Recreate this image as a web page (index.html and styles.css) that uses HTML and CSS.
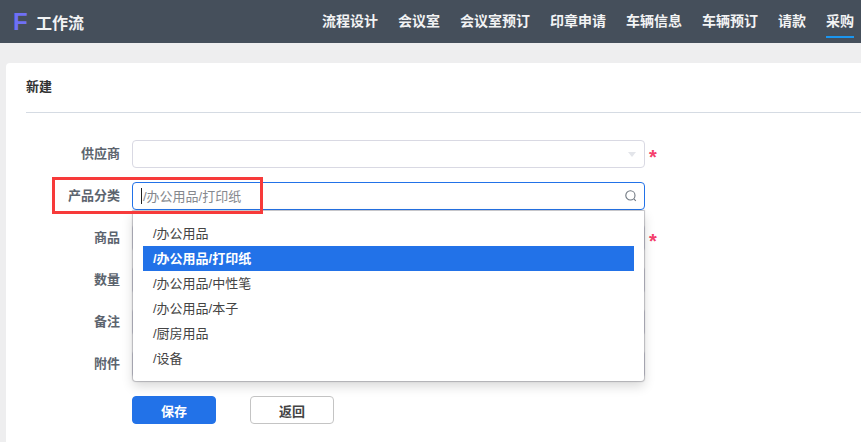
FILE: index.html
```html
<!DOCTYPE html>
<html lang="zh-CN">
<head>
<meta charset="utf-8">
<title>工作流</title>
<link rel="stylesheet" href="styles.css">
</head>
<body>
<header class="topbar">
  <div class="brand"><span class="brand-logo">F</span><span class="brand-name">工作流</span></div>
  <nav class="nav">
    <a class="nav-item">流程设计</a>
    <a class="nav-item">会议室</a>
    <a class="nav-item">会议室预订</a>
    <a class="nav-item">印章申请</a>
    <a class="nav-item">车辆信息</a>
    <a class="nav-item">车辆预订</a>
    <a class="nav-item">请款</a>
    <a class="nav-item active">采购</a>
  </nav>
</header>
<main class="main">
  <section class="card">
    <h1 class="card-title">新建</h1>
    <form class="form">
      <div class="row">
        <label class="label">供应商</label>
        <div class="field select"><span class="caret"></span></div>
        <span class="star">*</span>
      </div>
      <div class="row row-open">
        <label class="label">产品分类</label>
        <div class="field focus">
          <span class="cursor"></span><span class="placeholder">/办公用品/打印纸</span>
          <svg class="search" viewBox="0 0 14 14" width="14" height="14" aria-hidden="true"><circle cx="6.4" cy="6.4" r="4.6" fill="none" stroke="#6f7780" stroke-width="1.1"/><path d="M9.9 9.9l1.9 1.9" stroke="#6f7780" stroke-width="1.1" fill="none"/></svg>
        </div>
        <ul class="dropdown">
          <li class="option">/办公用品</li>
          <li class="option selected">/办公用品/打印纸</li>
          <li class="option">/办公用品/中性笔</li>
          <li class="option">/办公用品/本子</li>
          <li class="option">/厨房用品</li>
          <li class="option">/设备</li>
        </ul>
        <span class="highlight"></span>
      </div>
      <div class="row">
        <label class="label">商品</label>
        <div class="field"></div>
        <span class="star">*</span>
      </div>
      <div class="row">
        <label class="label">数量</label>
        <div class="field"></div>
      </div>
      <div class="row">
        <label class="label">备注</label>
        <div class="field"></div>
      </div>
      <div class="row">
        <label class="label">附件</label>
        <div class="field"></div>
      </div>
      <div class="actions">
        <button class="btn btn-primary" type="button">保存</button>
        <button class="btn btn-default" type="button">返回</button>
      </div>
    </form>
  </section>
</main>
</body>
</html>
```
FILE: styles.css
```css
* { box-sizing: border-box; }
html, body { margin: 0; padding: 0; height: 442px; overflow: hidden; }
body {
  background: #eeeeef;
  font-family: "Liberation Sans", "Noto Sans CJK SC", sans-serif;
  font-size: 13px;
  color: #333;
}
.topbar {
  height: 43px;
  background: #454f5b;
  display: flex;
  align-items: stretch;
  justify-content: space-between;
  padding: 0 7px 0 13px;
}
.brand { display: flex; align-items: center; }
.brand-logo {
  width: 24px;
  font-weight: 700;
  font-size: 24px;
  line-height: 1;
  color: #6f70f5;
}
.brand-name { margin-left: -1px; font-size: 16px; font-weight: 700; color: #f2f3f4; }
.nav { display: flex; gap: 20px; }
.nav-item {
  font-size: 14px;
  font-weight: 700;
  line-height: 20px;
  color: #f2f3f4;
  padding-top: 11px;
  height: 38px;
}
.nav-item.active { border-bottom: 2px solid #1a96f0; }
.main { padding: 20px 0 0 6px; }
.card {
  background: #fff;
  border-radius: 4px 0 0 0;
  height: 379px;
  padding: 0 0 0 20px;
}
.card-title {
  margin: 0;
  height: 50px;
  border-bottom: 1px solid #d5dbe3;
  font-size: 13px;
  font-weight: 700;
  line-height: 48px;
  color: #333;
}
.form { padding-top: 27px; }
.row {
  position: relative;
  display: flex;
  align-items: center;
  height: 28px;
  margin-bottom: 14px;
}
.label {
  width: 94px;
  margin-right: 12px;
  padding-bottom: 4px;
  text-align: right;
  font-weight: 700;
  color: #5c646e;
}
.field {
  position: relative;
  width: 513px;
  height: 28px;
  border: 1px solid #d9d9e3;
  border-radius: 4px;
  background: #fff;
  display: flex;
  align-items: center;
  padding-left: 8px;
}
.field.focus { border-color: #2272e8; }
.caret {
  position: absolute;
  right: 8px;
  top: 11px;
  border-left: 4px solid transparent;
  border-right: 4px solid transparent;
  border-top: 5px solid #e3e5ea;
}
.star {
  margin: 6px 0 0 4px;
  color: #f5406c;
  font-size: 20px;
  font-weight: 700;
  line-height: 20px;
}
.cursor { width: 1px; height: 16px; background: #222; margin-right: 1px; }
.placeholder { color: #85888d; padding-bottom: 2px; }
.search { position: absolute; right: 6px; top: 6px; }
.dropdown {
  position: absolute;
  z-index: 5;
  left: 107px;
  top: 29px;
  width: 511px;
  height: 170px;
  margin: 0;
  padding: 10px 10px 0 10px;
  list-style: none;
  background: #fff;
  border-radius: 0 0 3px 3px;
  box-shadow: 0 0 1px 1px rgba(90, 90, 100, 0.35), 0 5px 12px rgba(0, 0, 0, 0.16);
}
.option {
  height: 25px;
  line-height: 25px;
  padding-left: 10px;
  color: #444;
}
.option.selected { background: #2272e8; color: #fff; font-weight: 700; }
.highlight {
  position: absolute;
  z-index: 6;
  left: 26px;
  top: -5px;
  width: 211px;
  height: 37px;
  border: 3px solid #f73a3a;
}
.actions { display: flex; gap: 34px; padding: 4px 0 0 106px; }
.btn {
  width: 84px;
  height: 28px;
  border-radius: 4px;
  font-family: inherit;
  font-size: 13px;
  font-weight: 700;
  padding: 0;
}
.btn-primary { background: #2272e8; border: 1px solid #2272e8; color: #fff; }
.btn-default { background: #fff; border: 1px solid #c4c4c4; color: #444; }
```
